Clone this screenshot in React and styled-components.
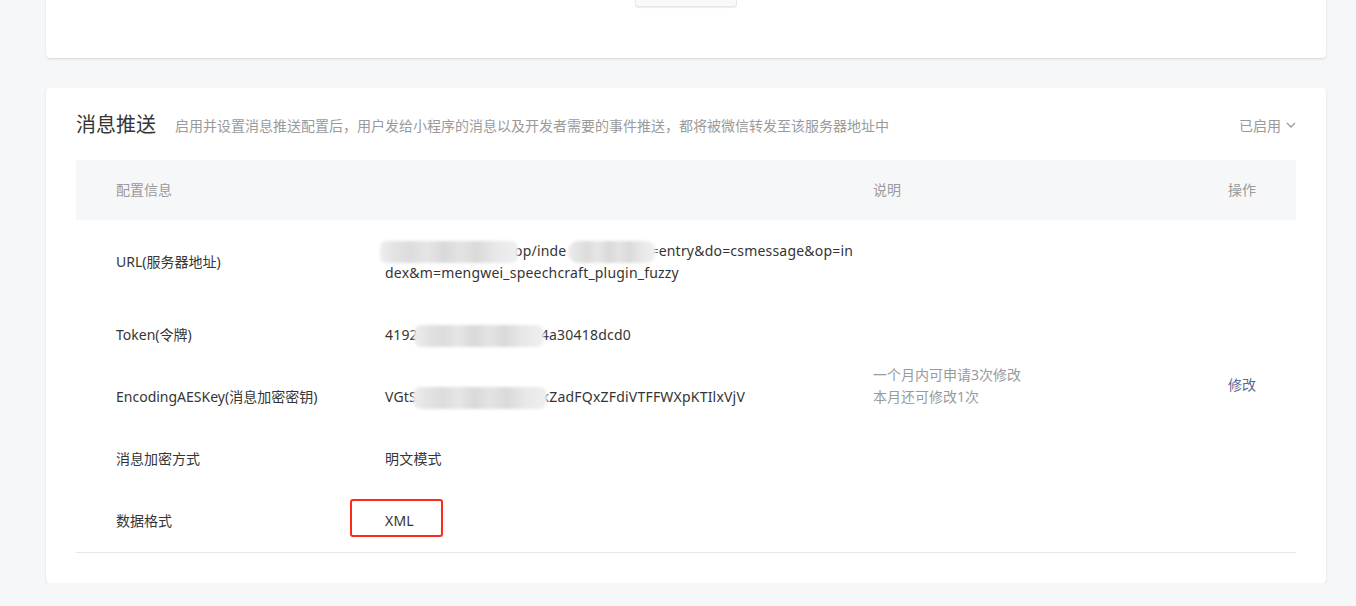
import React from "react";
import styled, { createGlobalStyle } from "styled-components";

const Global = createGlobalStyle`
  html, body { margin: 0; padding: 0; background: #f6f7f9; }
  body { font-family: "Noto Sans", "Noto Sans CJK SC", sans-serif; color: #353535; overflow: hidden; }
  * { box-sizing: border-box; }
`;

const Page = styled.div`
  padding: 0 30px 0 46px;
  display: flex;
  flex-direction: column;
  gap: 30px;
`;

const Card = styled.section`
  background: #fff;
  border-radius: 4px;
  box-shadow: 0 1px 2px rgba(140, 140, 140, 0.3);
`;

const TopCard = styled(Card)`
  margin-top: -29px;
  padding: 0 30px 51px;
  display: flex;
  justify-content: center;
`;

const GhostButton = styled.button`
  width: 102px;
  height: 36px;
  border: 1px solid #e4e8eb;
  border-radius: 3px;
  background: #f9f9f9;
  box-shadow: 0 1px 1px rgba(0, 0, 0, 0.08);
`;

const PushCard = styled(Card)`
  padding: 22px 30px 30px;
`;

const Head = styled.div`
  display: flex;
  align-items: center;
  height: 30px;
  margin-bottom: 20px;
`;

const Title = styled.h2`
  margin: 0;
  font-size: 20px;
  font-weight: 400;
  color: #353535;
  line-height: 30px;
`;

const Desc = styled.span`
  margin-left: 19px;
  font-size: 14px;
  color: #9a9a9a;
`;

const Status = styled.div`
  margin-left: auto;
  display: flex;
  align-items: center;
  gap: 5px;
  font-size: 14px;
  color: #9a9a9a;
`;

const Table = styled.div`
  display: grid;
  grid-template-columns: 309px 488px 355px 1fr;
  grid-template-rows: 60px 84px 62px 62px 62px 62px;
  border-bottom: 1px solid #e7e7eb;
  font-size: 14px;
  line-height: 22px;
`;

const HeadCell = styled.div`
  display: flex;
  align-items: center;
  background: #f6f7f9;
  color: #9a9a9a;
  padding-left: ${(p) => (p.$first ? "40px" : "0")};
`;

const Cell = styled.div`
  display: flex;
  align-items: center;
  color: #353535;
  padding-left: ${(p) => (p.$first ? "40px" : "0")};
  letter-spacing: ${(p) => (p.$value ? "0.2px" : "0")};
  position: relative;
`;

const SpanCell = styled.div`
  grid-column: ${(p) => p.$col};
  grid-row: ${(p) => p.$row};
  align-self: end;
  padding-bottom: ${(p) => p.$pb}px;
  color: ${(p) => (p.$link ? "#576b95" : "#9a9a9a")};
`;

const Lines = styled.div`
  display: flex;
  flex-direction: column;
`;

const Line = styled.span`
  white-space: nowrap;
  height: 22px;
`;

const Blur = styled.span`
  display: inline-block;
  position: relative;
  z-index: 1;
  width: ${(p) => p.$w}px;
  height: 22px;
  vertical-align: middle;
  margin-left: ${(p) => p.$ml || 0}px;
  margin-right: ${(p) => p.$mr || 0}px;
  border-radius: ${(p) => p.$r || 2}px;
  background: linear-gradient(
    90deg,
    #ededed 0%, #e2e2e2 12%, #dcdcdc 22%, #e6e6e6 34%, #d9d9d9 46%,
    #e3e3e3 58%, #dadada 70%, #e8e8e8 84%, #efefef 100%
  );
  filter: blur(1.5px);
`;

const Annotation = styled.span`
  position: absolute;
  left: -35px;
  top: 9px;
  width: 93px;
  height: 38px;
  border: 2px solid #ff2a1a;
  border-radius: 3px;
`;

const Chevron = () => (
  <svg width="10" height="6" viewBox="0 0 10 6" fill="none">
    <path d="M1 1l4 4 4-4" stroke="#9a9a9a" strokeWidth="1.3" />
  </svg>
);

export default function App() {
  return (
    <>
      <Global />
      <Page>
        <TopCard>
          <GhostButton aria-label="button" />
        </TopCard>
        <PushCard>
          <Head>
            <Title>消息推送</Title>
            <Desc>启用并设置消息推送配置后，用户发给小程序的消息以及开发者需要的事件推送，都将被微信转发至该服务器地址中</Desc>
            <Status>
              已启用 <Chevron />
            </Status>
          </Head>
          <Table>
            <HeadCell $first>配置信息</HeadCell>
            <HeadCell />
            <HeadCell>说明</HeadCell>
            <HeadCell>操作</HeadCell>

            <Cell $first>URL(服务器地址)</Cell>
            <Cell $value>
              <Lines>
                <Line>
                  <Blur $w={138} $ml={-5} $mr={-4} $r={6} />op/inde<Blur $w={88} $ml={2} $mr={-6} $r={11} />=entry&amp;do=csmessage&amp;op=in
                </Line>
                <Line>dex&amp;m=mengwei_speechcraft_plugin_fuzzy</Line>
              </Lines>
            </Cell>
            <Cell />
            <Cell />

            <Cell $first>Token(令牌)</Cell>
            <Cell $value>
              <Line>
                4192<Blur $w={130} $ml={-4} $mr={-3} $r={8} />4a30418dcd0
              </Line>
            </Cell>

            <Cell $first>EncodingAESKey(消息加密密钥)</Cell>
            <Cell $value>
              <Line>
                VGtS<Blur $w={134} $ml={-4} $mr={-14} $r={8} />VkZadFQxZFdiVTFFWXpKTIlxVjV
              </Line>
            </Cell>
            <SpanCell $col="3" $row="3 / span 2" $pb={20}>
              一个月内可申请3次修改
              <br />
              本月还可修改1次
            </SpanCell>
            <SpanCell $col="4" $row="3 / span 2" $pb={32} $link>
              修改
            </SpanCell>

            <Cell $first>消息加密方式</Cell>
            <Cell $value>明文模式</Cell>
            <Cell />
            <Cell />

            <Cell $first>数据格式</Cell>
            <Cell $value>
              XML
              <Annotation />
            </Cell>
            <Cell />
            <Cell />
          </Table>
        </PushCard>
      </Page>
    </>
  );
}
